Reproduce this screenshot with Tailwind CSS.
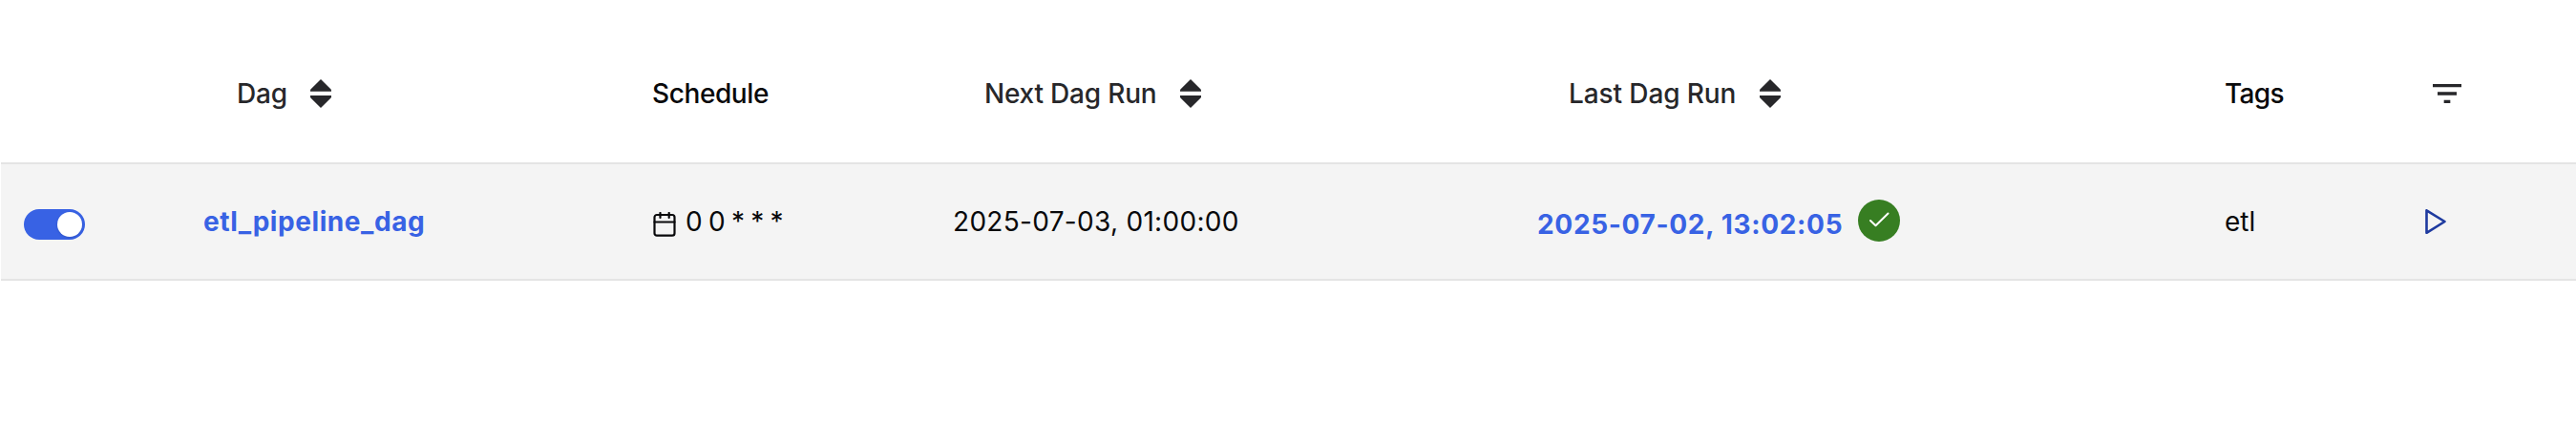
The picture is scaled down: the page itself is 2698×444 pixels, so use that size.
<!DOCTYPE html>
<html lang="en">
<head>
<meta charset="utf-8">
<title>Dags</title>
<script src="https://cdn.jsdelivr.net/npm/@tailwindcss/browser@4"></script>
</head>
<body class="bg-white font-['Inter',sans-serif] text-[28px] leading-10 text-[#09090b]">
<svg class="hidden">
  <symbol id="sort" viewBox="0 0 22 30">
    <path fill="#27272a" d="M11 0 21.600 10.500Q22 11 22 12V12.700H0V12Q0 11 .400 10.500ZM11 30 21.600 19.500Q22 19 22 18V17H0V18Q0 19 .400 19.500Z"/>
  </symbol>
</svg>
<div class="pl-px pt-[26px] h-[444px] overflow-hidden">
  <div class="grid grid-cols-[211px_470px_315px_612px_721px_1fr] h-[144px] items-center font-medium whitespace-nowrap">
    <div></div>
    <div class="flex items-center pl-9 text-[#27272a]"><span class="w-[77px] tracking-[-0.2px]">Dag</span><svg class="w-[22px] h-[30px]"><use href="#sort"/></svg></div>
    <div class="pl-px tracking-[-0.4px]">Schedule</div>
    <div class="flex items-center pl-[34px] text-[#27272a]"><span class="w-[205px] tracking-[-0.2px]">Next Dag Run</span><svg class="w-[22px] h-[30px]"><use href="#sort"/></svg></div>
    <div class="flex items-center pl-[34px] text-[#27272a]"><span class="w-[200px] tracking-[-0.1px]">Last Dag Run</span><svg class="w-[22px] h-[30px]"><use href="#sort"/></svg></div>
    <div class="flex items-center"><span class="w-[218px] tracking-[-0.7px]">Tags</span><svg class="w-[30px] h-5" viewBox="0 0 30 20" fill="#27272a"><path d="M0 0h30v3.330H0zM5 8.330h20v3.340H5zM11.670 16.670h6.660V20h-6.660z"/></svg></div>
  </div>
  <div class="grid grid-cols-[211px_470px_315px_612px_721px_1fr] h-[124px] items-center border-y-2 border-[#e4e4e4] bg-[#f4f4f4] whitespace-nowrap">
    <div class="pl-6 pt-[6px]"><div class="flex w-16 h-8 items-center justify-end rounded-full bg-[#3862e4] pr-[3px]"><div class="size-[26px] rounded-full bg-white shadow"></div></div></div>
    <div class="pl-px font-bold tracking-[0.57px] text-[#3862e4]">etl_pipeline_dag</div>
    <div class="flex items-center"><svg class="mt-[6px] mr-[10px] ml-[2px] w-6 h-[26px]" viewBox="0 0 24 26" fill="none" stroke="#09090b" stroke-width="2.200" stroke-linecap="round"><rect x="1.500" y="3" width="21" height="21.700" rx="2.500"/><path d="M1.500 10.500h21M7.500 1v5M16.700 1v5"/></svg><span class="[word-spacing:-1.6px]">0 0 * * *</span></div>
    <div class="pl-px tracking-[0.3px]">2025-07-03, 01:00:00</div>
    <div class="flex items-center"><span class="w-[337px] pl-px pt-[6px] font-bold tracking-[0.68px] text-[#3862e4]">2025-07-02, 13:02:05</span><span class="flex size-11 mb-[2px] items-center justify-center rounded-full bg-[#377e22]"><svg class="size-6" viewBox="0 0 24 24" fill="none" stroke="white" stroke-width="2" stroke-linecap="round" stroke-linejoin="round"><path d="M3 12 8.500 17.300 21.500 4.500"/></svg></span></div>
    <div class="flex items-center"><span class="w-[210px]">etl</span><svg class="w-[22px] h-[26px]" viewBox="0 0 22 26" fill="none" stroke="#1e3a9f" stroke-width="2.600" stroke-linejoin="round"><path d="M1.500 1.300v23.500L20.500 13Z"/></svg></div>
  </div>
</div>
</body>
</html>
